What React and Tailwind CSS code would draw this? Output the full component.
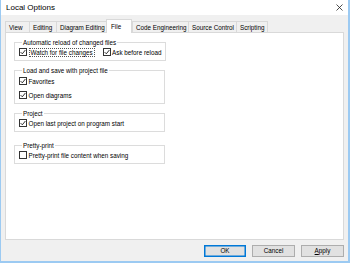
import React from 'react';

const FONT = { fontFamily: '"Liberation Sans", Arial, sans-serif' };

const TABS = [
  { label: 'View', w: 'w-[24px]' },
  { label: 'Editing', w: 'w-[27px]' },
  { label: 'Diagram Editing', w: 'w-[50px]' },
  { label: 'File', w: 'w-[26px]', active: true },
  { label: 'Code Engineering', w: 'w-[56px]' },
  { label: 'Source Control', w: 'w-[48px]' },
  { label: 'Scripting', w: 'w-[32px]' },
];

const Check = ({ checked }) => (
  <span className="w-[8px] h-[8px] border border-[#333] bg-white flex items-center justify-center shrink-0">
    {checked && (
      <svg width="6" height="6" viewBox="0 0 6 6">
        <path d="M0.6 3.1 L2.3 4.8 L5.4 1" fill="none" stroke="#1a1a1a" strokeWidth="0.9" />
      </svg>
    )}
  </span>
);

const Option = ({ label, checked, focused }) => (
  <div className="flex items-center gap-[1.5px] h-[10px] whitespace-nowrap shrink-0">
    <Check checked={checked} />
    <span className={focused ? 'border border-dotted border-[#555] px-[1px] leading-[7px]' : 'leading-[9px]'}>
      {label}
    </span>
  </div>
);

const Group = ({ title, className = 'mt-[5px]', children }) => (
  <fieldset className={`border border-[#dcdcdc] w-[151px] pl-[4px] pr-[4px] pb-[3px] ${className}`}>
    <legend className="ml-[3px] px-[1px] leading-[9px] whitespace-nowrap">{title}</legend>
    {children}
  </fieldset>
);

export default function App() {
  return (
    <div
      style={FONT}
      className="w-[350px] h-[263px] flex flex-col bg-[#f0f0f0] border-l border-r-2 border-b-2 border-[#9ccaf2] text-[6.3px] text-black overflow-hidden"
    >
      <div className="h-[15px] bg-white flex items-center justify-between pl-[5px] pr-[4px] shrink-0">
        <span className="text-[8px]">Local Options</span>
        <svg width="7" height="7" viewBox="0 0 7 7" className="mr-[1px]">
          <path d="M0.5 0.5 L6.5 6.5 M6.5 0.5 L0.5 6.5" stroke="#222" strokeWidth="0.8" />
        </svg>
      </div>

      <div className="flex-1 flex flex-col pl-[4px] pr-[4px]">
        <div className="flex items-end h-[17px] pt-[4px]">
          {TABS.map((t) =>
            t.active ? (
              <div
                key={t.label}
                className={`${t.w} h-[14px] -mb-px relative z-10 bg-white border border-b-0 border-[#d9d9d9] pl-[4px] pt-[2px] leading-[9px]`}
              >
                {t.label}
              </div>
            ) : (
              <div
                key={t.label}
                className={`${t.w} h-[11px] bg-[#f0f0f0] border border-b-0 border-r-0 last:border-r border-[#d9d9d9] pl-[3px] pt-[1px] leading-[9px] whitespace-nowrap`}
              >
                {t.label}
              </div>
            )
          )}
        </div>

        <div className="h-[208px] bg-white border border-[#d9d9d9] pl-[8px] pt-[5px] flex flex-col">
          <Group title="Automatic reload of changed files" className="mt-0">
            <div className="flex items-center gap-[8px]">
              <Option label="Watch for file changes" checked focused />
              <Option label="Ask before reload" checked />
            </div>
          </Group>
          <Group title="Load and save with project file">
            <div className="flex flex-col gap-[4px] mt-[1px]">
              <Option label="Favorites" checked />
              <Option label="Open diagrams" checked />
            </div>
          </Group>
          <Group title="Project" className="mt-[5px] pb-[1px]">
            <Option label="Open last project on program start" checked />
          </Group>
          <Group title="Pretty-print" className="mt-[9px]">
            <Option label="Pretty-print file content when saving" />
          </Group>
        </div>

        <div className="flex justify-end gap-[6px] mt-[5px]">
          <button className="w-[42px] h-[12px] bg-[#e1e1e1] border border-[#0078d7] shadow-[inset_0_0_0_0.5px_#0078d7] leading-none">
            OK
          </button>
          <button className="w-[43px] h-[12px] bg-[#e1e1e1] border border-[#adadad] leading-none">Cancel</button>
          <button className="w-[43px] h-[12px] bg-[#e1e1e1] border border-[#adadad] leading-none">
            <span className="underline decoration-[0.5px]">A</span>pply
          </button>
        </div>
      </div>
    </div>
  );
}
